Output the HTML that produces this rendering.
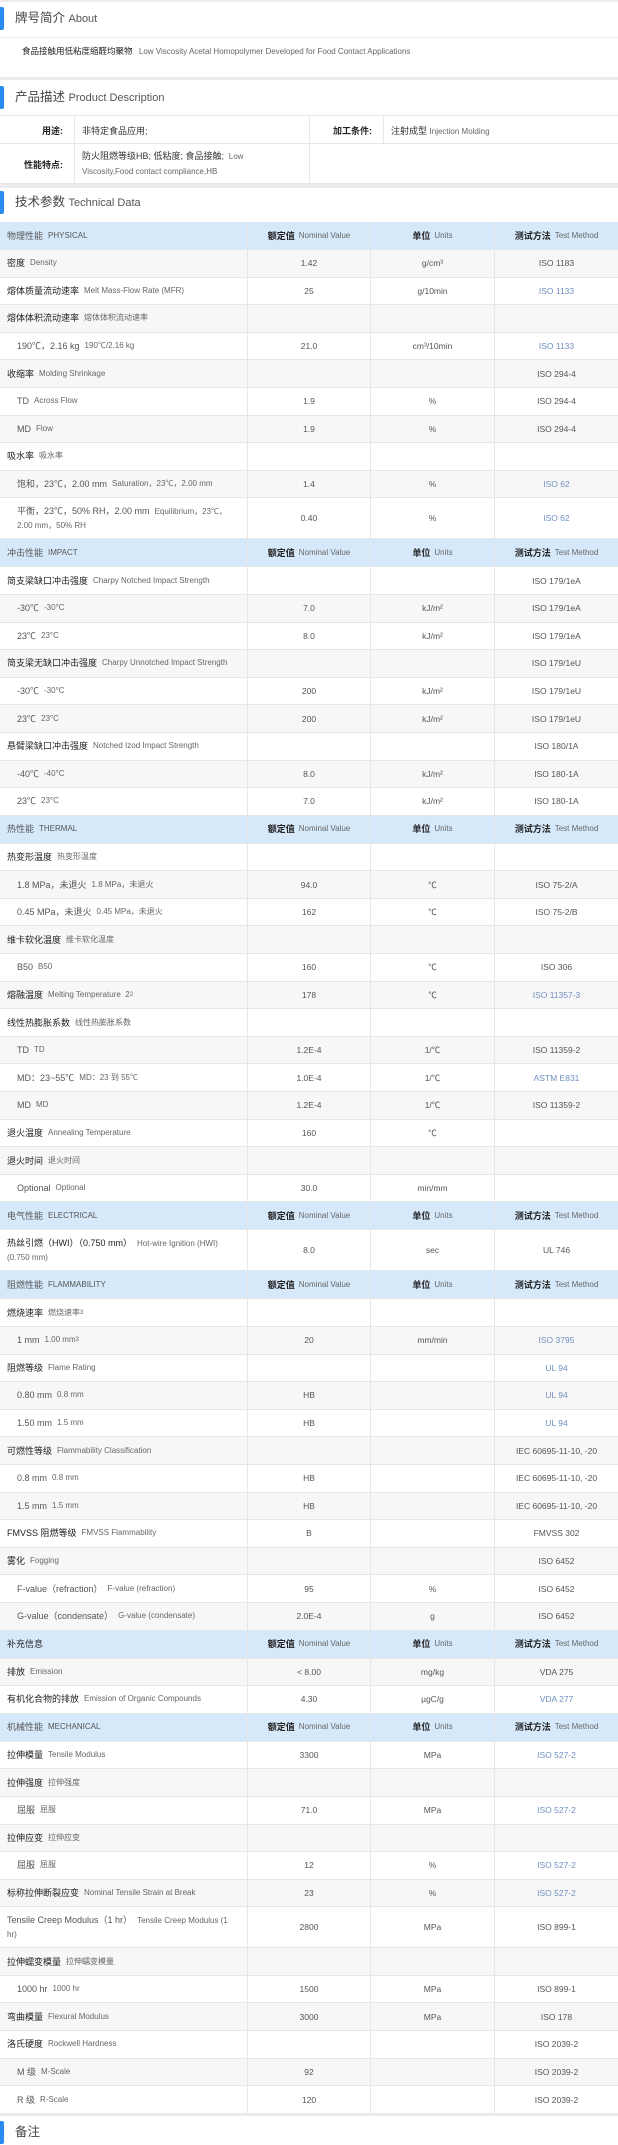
<!DOCTYPE html>
<html><head><meta charset="utf-8"><style>
*{box-sizing:border-box;margin:0;padding:0}
body{width:618px;height:2145px;overflow:hidden;background:#fff;font-family:"Liberation Sans","Noto Sans CJK SC",sans-serif;color:#333;position:relative}
.abs{position:absolute;left:0;width:618px}
.band{background:#ececec}
.hd{position:absolute;left:0;width:618px;height:24px}
.hd .bar{position:absolute;left:0;top:0;width:4px;height:23px;background:#2a8cf0;border-radius:0 2px 2px 0}
.hd .t{position:absolute;left:15px;top:3px;font-size:12.5px;line-height:17px;color:#444}
.hd .t span{font-size:11px;color:#555}
.pd{position:absolute;left:0;top:115px;width:618px;font-size:9px}
.pd div{position:absolute;border:1px solid #e8e8e8}
.tbl{position:absolute;left:0;top:222px;width:618px}
.r{display:flex;height:27.6px;border-bottom:1px solid #e6e6e6}
.r.d{height:41px}
.r:nth-child(even){background:#f7f7f7}
.r.h{background:#d6e9fb;height:28px}
.r>div{border-right:1px solid #e6e6e6;display:flex;align-items:center;font-size:8px;color:#666;line-height:14px}
.c1{width:248px;padding-left:7px}
.c2{width:123px;justify-content:center}
.c3{width:124px;justify-content:center}
.c4{width:123px;justify-content:center;border-right:none!important}
.s .c1{padding-left:17px}
.c1 b{font-weight:normal;font-size:9px;color:#222;margin-right:5px}
.s .c1 b{color:#555}
.c2,.c3,.c4{font-size:8.5px!important;color:#555!important}
.bl{color:#6f8fc0!important}
.h .c1{color:#555;font-size:8px}
.h .c1 b{color:#555;font-weight:normal}
.h .c2 b,.h .c3 b,.h .c4 b{font-weight:bold;font-size:9px;color:#222;margin-right:4px}
.h .c2,.h .c3,.h .c4{color:#666!important;font-size:8px!important}
sup{font-size:6px;vertical-align:top;line-height:8px}
</style></head><body>
<div class="abs band" style="top:0;height:2px"></div>
<div class="hd" style="top:7px"><div class="bar"></div><div class="t">牌号简介 <span>About</span></div></div>
<div class="abs" style="top:37px;height:1px;background:#ececec"></div>
<div class="abs" style="top:45px;left:22px;font-size:8.5px;line-height:12px;color:#222">食品接触用低粘度缩醛均聚物 <span style="color:#666;font-size:8px;margin-left:4px">Low Viscosity Acetal Homopolymer Developed for Food Contact Applications</span></div>
<div class="abs band" style="top:77px;height:3px"></div>
<div class="hd" style="top:86px"><div class="bar"></div><div class="t">产品描述 <span>Product Description</span></div></div>
<div class="pd">
<div style="left:-1px;top:0;width:76px;height:29px;text-align:right;padding:8px 11px 0 0;font-weight:bold;color:#222">用途:</div>
<div style="left:74px;top:0;width:236px;height:29px;padding:8px 0 0 7px;color:#333">非特定食品应用;</div>
<div style="left:309px;top:0;width:75px;height:29px;text-align:right;padding:8px 11px 0 0;font-weight:bold;color:#222">加工条件:</div>
<div style="left:383px;top:0;width:236px;height:29px;padding:8px 0 0 7px;color:#333">注射成型 <span style="font-size:8px;color:#666">Injection Molding</span></div>
<div style="left:-1px;top:28px;width:76px;height:41px;text-align:right;padding:14px 11px 0 0;font-weight:bold;color:#222">性能特点:</div>
<div style="left:74px;top:28px;width:236px;height:41px;padding:5px 0 0 7px;color:#333;line-height:14px">防火阻燃等级HB; 低粘度; 食品接触; <span style="font-size:8px;color:#666">&nbsp;Low<br>Viscosity,Food contact compliance,HB</span></div>
<div style="left:309px;top:28px;width:310px;height:41px;border-left:1px solid #e8e8e8"></div>
</div>
<div class="abs band" style="top:184px;height:4px"></div>
<div class="hd" style="top:191px"><div class="bar"></div><div class="t">技术参数 <span>Technical Data</span></div></div>

<div class="tbl">
<div class="r h"><div class="c1"><b>物理性能</b>PHYSICAL</div><div class="c2"><b>额定值</b>Nominal Value</div><div class="c3"><b>单位</b>Units</div><div class="c4"><b>测试方法</b>Test Method</div></div>
<div class="r"><div class="c1"><b>密度</b>Density</div><div class="c2">1.42</div><div class="c3">g/cm³</div><div class="c4">ISO 1183</div></div>
<div class="r"><div class="c1"><b>熔体质量流动速率</b>Melt Mass-Flow Rate (MFR)</div><div class="c2">25</div><div class="c3">g/10min</div><div class="c4 bl">ISO 1133</div></div>
<div class="r"><div class="c1"><b>熔体体积流动速率</b>熔体体积流动速率</div><div class="c2"></div><div class="c3"></div><div class="c4"></div></div>
<div class="r s"><div class="c1"><b>190℃，2.16 kg</b>190℃/2.16 kg</div><div class="c2">21.0</div><div class="c3">cm³/10min</div><div class="c4 bl">ISO 1133</div></div>
<div class="r"><div class="c1"><b>收缩率</b>Molding Shrinkage</div><div class="c2"></div><div class="c3"></div><div class="c4">ISO 294-4</div></div>
<div class="r s"><div class="c1"><b>TD</b>Across Flow</div><div class="c2">1.9</div><div class="c3">%</div><div class="c4">ISO 294-4</div></div>
<div class="r s"><div class="c1"><b>MD</b>Flow</div><div class="c2">1.9</div><div class="c3">%</div><div class="c4">ISO 294-4</div></div>
<div class="r"><div class="c1"><b>吸水率</b>吸水率</div><div class="c2"></div><div class="c3"></div><div class="c4"></div></div>
<div class="r s"><div class="c1"><b>饱和，23℃，2.00 mm</b>Saturation，23℃，2.00 mm</div><div class="c2">1.4</div><div class="c3">%</div><div class="c4 bl">ISO 62</div></div>
<div class="r s d"><div class="c1" style="display:block;padding-top:6px"><b>平衡，23℃，50% RH，2.00 mm</b>Equilibrium，23℃，<br>2.00 mm，50% RH</div><div class="c2">0.40</div><div class="c3">%</div><div class="c4 bl">ISO 62</div></div>

<div class="r h"><div class="c1"><b>冲击性能</b>IMPACT</div><div class="c2"><b>额定值</b>Nominal Value</div><div class="c3"><b>单位</b>Units</div><div class="c4"><b>测试方法</b>Test Method</div></div>
<div class="r"><div class="c1"><b>简支梁缺口冲击强度</b>Charpy Notched Impact Strength</div><div class="c2"></div><div class="c3"></div><div class="c4">ISO 179/1eA</div></div>
<div class="r s"><div class="c1"><b>-30℃</b>-30°C</div><div class="c2">7.0</div><div class="c3">kJ/m²</div><div class="c4">ISO 179/1eA</div></div>
<div class="r s"><div class="c1"><b>23℃</b>23°C</div><div class="c2">8.0</div><div class="c3">kJ/m²</div><div class="c4">ISO 179/1eA</div></div>
<div class="r"><div class="c1"><b>简支梁无缺口冲击强度</b>Charpy Unnotched Impact Strength</div><div class="c2"></div><div class="c3"></div><div class="c4">ISO 179/1eU</div></div>
<div class="r s"><div class="c1"><b>-30℃</b>-30°C</div><div class="c2">200</div><div class="c3">kJ/m²</div><div class="c4">ISO 179/1eU</div></div>
<div class="r s"><div class="c1"><b>23℃</b>23°C</div><div class="c2">200</div><div class="c3">kJ/m²</div><div class="c4">ISO 179/1eU</div></div>
<div class="r"><div class="c1"><b>悬臂梁缺口冲击强度</b>Notched Izod Impact Strength</div><div class="c2"></div><div class="c3"></div><div class="c4">ISO 180/1A</div></div>
<div class="r s"><div class="c1"><b>-40℃</b>-40°C</div><div class="c2">8.0</div><div class="c3">kJ/m²</div><div class="c4">ISO 180-1A</div></div>
<div class="r s"><div class="c1"><b>23℃</b>23°C</div><div class="c2">7.0</div><div class="c3">kJ/m²</div><div class="c4">ISO 180-1A</div></div>

<div class="r h"><div class="c1"><b>热性能</b>THERMAL</div><div class="c2"><b>额定值</b>Nominal Value</div><div class="c3"><b>单位</b>Units</div><div class="c4"><b>测试方法</b>Test Method</div></div>
<div class="r"><div class="c1"><b>热变形温度</b>热变形温度</div><div class="c2"></div><div class="c3"></div><div class="c4"></div></div>
<div class="r s"><div class="c1"><b>1.8 MPa，未退火</b>1.8 MPa，未退火</div><div class="c2">94.0</div><div class="c3">℃</div><div class="c4">ISO 75-2/A</div></div>
<div class="r s"><div class="c1"><b>0.45 MPa，未退火</b>0.45 MPa，未退火</div><div class="c2">162</div><div class="c3">℃</div><div class="c4">ISO 75-2/B</div></div>
<div class="r"><div class="c1"><b>维卡软化温度</b>维卡软化温度</div><div class="c2"></div><div class="c3"></div><div class="c4"></div></div>
<div class="r s"><div class="c1"><b>B50</b>B50</div><div class="c2">160</div><div class="c3">℃</div><div class="c4">ISO 306</div></div>
<div class="r"><div class="c1"><b>熔融温度</b>Melting Temperature &nbsp;2 <sup>2</sup></div><div class="c2">178</div><div class="c3">℃</div><div class="c4 bl">ISO 11357-3</div></div>
<div class="r"><div class="c1"><b>线性热膨胀系数</b>线性热膨胀系数</div><div class="c2"></div><div class="c3"></div><div class="c4"></div></div>
<div class="r s"><div class="c1"><b>TD</b>TD</div><div class="c2">1.2E-4</div><div class="c3">1/℃</div><div class="c4">ISO 11359-2</div></div>
<div class="r s"><div class="c1"><b>MD：23~55℃</b>MD：23 到 55℃</div><div class="c2">1.0E-4</div><div class="c3">1/℃</div><div class="c4 bl">ASTM E831</div></div>
<div class="r s"><div class="c1"><b>MD</b>MD</div><div class="c2">1.2E-4</div><div class="c3">1/℃</div><div class="c4">ISO 11359-2</div></div>
<div class="r"><div class="c1"><b>退火温度</b>Annealing Temperature</div><div class="c2">160</div><div class="c3">℃</div><div class="c4"></div></div>
<div class="r"><div class="c1"><b>退火时间</b>退火时间</div><div class="c2"></div><div class="c3"></div><div class="c4"></div></div>
<div class="r s"><div class="c1"><b>Optional</b>Optional</div><div class="c2">30.0</div><div class="c3">min/mm</div><div class="c4"></div></div>

<div class="r h"><div class="c1"><b>电气性能</b>ELECTRICAL</div><div class="c2"><b>额定值</b>Nominal Value</div><div class="c3"><b>单位</b>Units</div><div class="c4"><b>测试方法</b>Test Method</div></div>
<div class="r d"><div class="c1" style="display:block;padding-top:6px"><b>热丝引燃（HWI）（0.750 mm）</b>Hot-wire Ignition (HWI)<br>(0.750 mm)</div><div class="c2">8.0</div><div class="c3">sec</div><div class="c4">UL 746</div></div>

<div class="r h"><div class="c1"><b>阻燃性能</b>FLAMMABILITY</div><div class="c2"><b>额定值</b>Nominal Value</div><div class="c3"><b>单位</b>Units</div><div class="c4"><b>测试方法</b>Test Method</div></div>
<div class="r"><div class="c1"><b>燃烧速率</b>燃烧速率 <sup>3</sup></div><div class="c2"></div><div class="c3"></div><div class="c4"></div></div>
<div class="r s"><div class="c1"><b>1 mm</b>1.00 mm <sup>3</sup></div><div class="c2">20</div><div class="c3">mm/min</div><div class="c4 bl">ISO 3795</div></div>
<div class="r"><div class="c1"><b>阻燃等级</b>Flame Rating</div><div class="c2"></div><div class="c3"></div><div class="c4 bl">UL 94</div></div>
<div class="r s"><div class="c1"><b>0.80 mm</b>0.8 mm</div><div class="c2">HB</div><div class="c3"></div><div class="c4 bl">UL 94</div></div>
<div class="r s"><div class="c1"><b>1.50 mm</b>1.5 mm</div><div class="c2">HB</div><div class="c3"></div><div class="c4 bl">UL 94</div></div>
<div class="r"><div class="c1"><b>可燃性等级</b>Flammability Classification</div><div class="c2"></div><div class="c3"></div><div class="c4">IEC 60695-11-10, -20</div></div>
<div class="r s"><div class="c1"><b>0.8 mm</b>0.8 mm</div><div class="c2">HB</div><div class="c3"></div><div class="c4">IEC 60695-11-10, -20</div></div>
<div class="r s"><div class="c1"><b>1.5 mm</b>1.5 mm</div><div class="c2">HB</div><div class="c3"></div><div class="c4">IEC 60695-11-10, -20</div></div>
<div class="r"><div class="c1"><b>FMVSS 阻燃等级</b>FMVSS Flammability</div><div class="c2">B</div><div class="c3"></div><div class="c4">FMVSS 302</div></div>
<div class="r"><div class="c1"><b>雾化</b>Fogging</div><div class="c2"></div><div class="c3"></div><div class="c4">ISO 6452</div></div>
<div class="r s"><div class="c1"><b>F-value（refraction）</b>F-value (refraction)</div><div class="c2">95</div><div class="c3">%</div><div class="c4">ISO 6452</div></div>
<div class="r s"><div class="c1"><b>G-value（condensate）</b>G-value (condensate)</div><div class="c2">2.0E-4</div><div class="c3">g</div><div class="c4">ISO 6452</div></div>

<div class="r h"><div class="c1"><b style="color:#222">补充信息</b></div><div class="c2"><b>额定值</b>Nominal Value</div><div class="c3"><b>单位</b>Units</div><div class="c4"><b>测试方法</b>Test Method</div></div>
<div class="r"><div class="c1"><b>排放</b>Emission</div><div class="c2">&lt; 8.00</div><div class="c3">mg/kg</div><div class="c4">VDA 275</div></div>
<div class="r"><div class="c1"><b>有机化合物的排放</b>Emission of Organic Compounds</div><div class="c2">4.30</div><div class="c3">µgC/g</div><div class="c4 bl">VDA 277</div></div>

<div class="r h"><div class="c1"><b>机械性能</b>MECHANICAL</div><div class="c2"><b>额定值</b>Nominal Value</div><div class="c3"><b>单位</b>Units</div><div class="c4"><b>测试方法</b>Test Method</div></div>
<div class="r"><div class="c1"><b>拉伸模量</b>Tensile Modulus</div><div class="c2">3300</div><div class="c3">MPa</div><div class="c4 bl">ISO 527-2</div></div>
<div class="r"><div class="c1"><b>拉伸强度</b>拉伸强度</div><div class="c2"></div><div class="c3"></div><div class="c4"></div></div>
<div class="r s"><div class="c1"><b>屈服</b>屈服</div><div class="c2">71.0</div><div class="c3">MPa</div><div class="c4 bl">ISO 527-2</div></div>
<div class="r"><div class="c1"><b>拉伸应变</b>拉伸应变</div><div class="c2"></div><div class="c3"></div><div class="c4"></div></div>
<div class="r s"><div class="c1"><b>屈服</b>屈服</div><div class="c2">12</div><div class="c3">%</div><div class="c4 bl">ISO 527-2</div></div>
<div class="r"><div class="c1"><b>标称拉伸断裂应变</b>Nominal Tensile Strain at Break</div><div class="c2">23</div><div class="c3">%</div><div class="c4 bl">ISO 527-2</div></div>
<div class="r d"><div class="c1" style="display:block;padding-top:6px"><b style="color:#555">Tensile Creep Modulus（1 hr）</b>Tensile Creep Modulus (1<br>hr)</div><div class="c2">2800</div><div class="c3">MPa</div><div class="c4">ISO 899-1</div></div>
<div class="r"><div class="c1"><b>拉伸蠕变模量</b>拉伸蠕变模量</div><div class="c2"></div><div class="c3"></div><div class="c4"></div></div>
<div class="r s"><div class="c1"><b>1000 hr</b>1000 hr</div><div class="c2">1500</div><div class="c3">MPa</div><div class="c4">ISO 899-1</div></div>
<div class="r"><div class="c1"><b>弯曲模量</b>Flexural Modulus</div><div class="c2">3000</div><div class="c3">MPa</div><div class="c4">ISO 178</div></div>
<div class="r"><div class="c1"><b>洛氏硬度</b>Rockwell Hardness</div><div class="c2"></div><div class="c3"></div><div class="c4">ISO 2039-2</div></div>
<div class="r s"><div class="c1"><b>M 级</b>M-Scale</div><div class="c2">92</div><div class="c3"></div><div class="c4">ISO 2039-2</div></div>
<div class="r s"><div class="c1"><b>R 级</b>R-Scale</div><div class="c2">120</div><div class="c3"></div><div class="c4">ISO 2039-2</div></div>
</div>
<div class="abs band" style="top:2113px;height:3px"></div>
<div class="hd" style="top:2121px"><div class="bar"></div><div class="t">备注</div></div>
</body></html>
